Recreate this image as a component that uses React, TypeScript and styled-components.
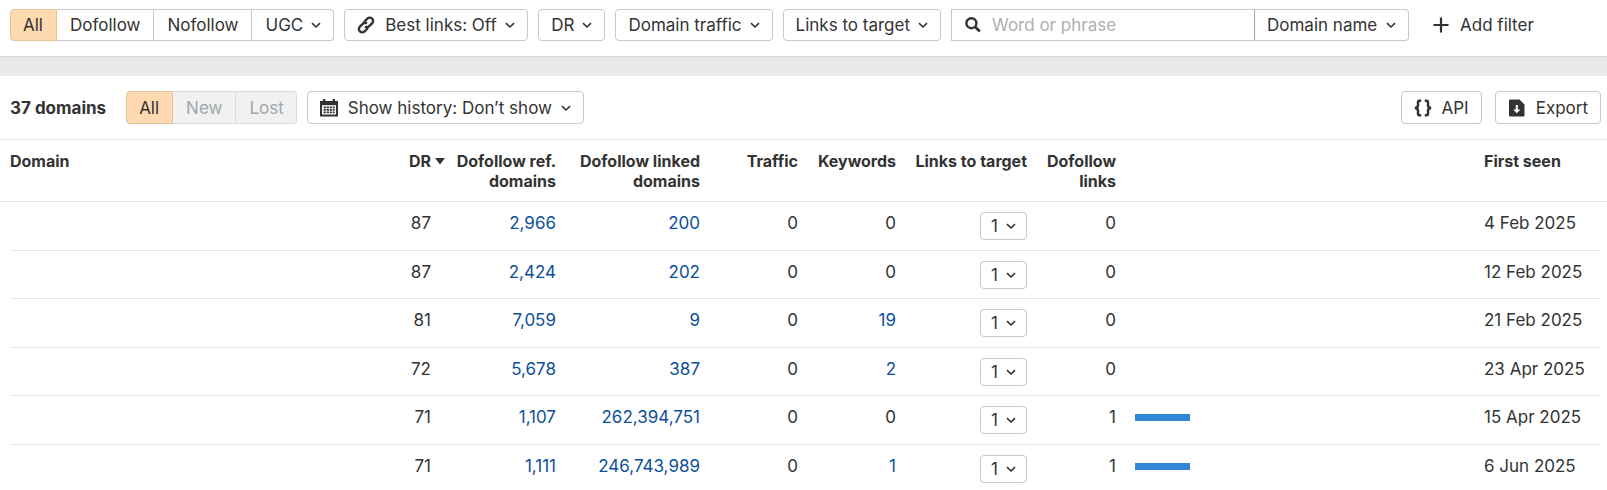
import React from "react";
import styled, { createGlobalStyle, css } from "styled-components";

const ink = "#333333";
const edge = "#c6c8c9";
const line = "#e6e7e8";
const linkBlue = "#0d4f9c";

const GlobalStyle = createGlobalStyle`
  *, *::before, *::after { box-sizing: border-box; }
  body {
    margin: 0;
    background: #ffffff;
    color: ${ink};
    font: 400 17px/24px Inter, "Liberation Sans", sans-serif;
  }
  button, select, input { font: inherit; color: inherit; margin: 0; }
  button, select { cursor: pointer; }
`;

const FilterBar = styled.header`
  display: flex;
  align-items: center;
  gap: 10px;
  padding: 9px 10px 15px;
  border-bottom: 1px solid #d5d8d9;
`;

const Divider = styled.div`
  height: 19px;
  background: #e8eaeb;
`;

const ResultsBar = styled.div`
  display: flex;
  align-items: center;
  gap: 10px;
  padding: 15px 6px 15px 10px;
`;

const Count = styled.h1`
  margin: 0 10px 0 0;
  font-size: 17px;
  line-height: 24px;
  font-weight: 700;
  white-space: nowrap;
`;

const Actions = styled.div`
  display: flex;
  gap: 13px;
  margin-left: auto;
`;

const control = css`
  display: inline-flex;
  align-items: center;
  flex: none;
  height: 32px;
  padding: 0 12px;
  border: 1px solid ${edge};
  border-radius: 4px;
  background: #ffffff;
  white-space: nowrap;
`;

const Button = styled.button<{ $tall?: boolean; $plain?: boolean }>`
  ${control}
  ${(p) => p.$tall && "height: 33px;"}
  ${(p) => p.$plain && "border-color: transparent; background: none;"}
`;

const SelectBox = styled.label<{ $tall?: boolean; $joined?: boolean }>`
  ${control}
  ${(p) => p.$tall && "height: 33px;"}
  ${(p) => p.$joined && "border-left-color: #a3a5a6; border-radius: 0 4px 4px 0;"}
`;

const Select = styled.select`
  appearance: none;
  border: 0;
  padding: 0;
  background: none;
  outline: none;
  height: 24px;
`;

const Segments = styled.div`
  display: flex;
  flex: none;
`;

const Segment = styled.button<{ $tall?: boolean }>`
  ${control}
  padding: 0 13px;
  border-radius: 0;
  ${(p) => p.$tall && "height: 33px;"}
  & + & { border-left: 0; }
  &:first-child { border-radius: 4px 0 0 4px; padding-left: 12px; }
  &:last-child { border-radius: 0 4px 4px 0; padding-right: 12px; }
  &[aria-pressed="true"] {
    background: #ffdab0;
    border-color: #e5c397;
  }
  &:disabled {
    background: #f0f1f2;
    border-color: #d9dbdc;
    color: #a3a6a8;
    cursor: default;
  }
`;

const SearchGroup = styled.div`
  display: flex;
  flex: 0 1 458px;
  min-width: 0;
`;

const SearchBox = styled.label`
  display: flex;
  align-items: center;
  flex: 1 1 0;
  min-width: 0;
  height: 32px;
  padding: 0 12px;
  border: 1px solid ${edge};
  border-right: 0;
`;

const SearchInput = styled.input`
  flex: 1;
  min-width: 0;
  border: 0;
  padding: 0;
  outline: none;
  background: none;
  &::placeholder { color: #adafb0; opacity: 1; }
`;

const LeadIcon = styled.svg.attrs({ width: 18, height: 18, viewBox: "0 0 18 18" })`
  display: block;
  flex: none;
  margin-right: 10px;
`;

const ChevronIcon = styled.svg`
  display: block;
  flex: none;
  margin-left: 8px;
`;

const Table = styled.table`
  width: 100%;
  table-layout: fixed;
  border-spacing: 0;
  border-top: 1px solid ${line};
`;

const Col = styled.col<{ $w?: number }>`
  ${(p) => p.$w && `width: ${p.$w}px;`}
`;

const HeadCell = styled.th<{ $start?: boolean }>`
  height: 62px;
  padding: 11px 0 10px ${(p) => (p.$start ? 10 : 0)}px;
  border-bottom: 1px solid ${line};
  vertical-align: top;
  text-align: ${(p) => (p.$start ? "left" : "right")};
  font-size: 16px;
  line-height: 20px;
  font-weight: 700;
  white-space: nowrap;
`;

const SortButton = styled.button`
  position: relative;
  border: 0;
  padding: 0;
  background: none;
`;

const SortArrow = styled.svg`
  position: absolute;
  left: calc(100% + 4px);
  top: 7px;
`;

const Row = styled.tr`
  height: 49px;
  background: linear-gradient(${line}, ${line}) 10px 100% / calc(100% - 16px) 1px no-repeat;
  &:nth-child(even) { height: 48px; }
  &:last-child { height: 44px; background: none; }
`;

const Cell = styled.td<{ $start?: boolean }>`
  padding: 9px 0 0 ${(p) => (p.$start ? 10 : 0)}px;
  vertical-align: top;
  text-align: ${(p) => (p.$start ? "left" : "right")};
  white-space: nowrap;
`;

const NumberLink = styled.a`
  color: ${linkBlue};
  text-decoration: none;
`;

const LinksButton = styled.button`
  ${control}
  height: 28px;
  margin-top: 1px;
  padding: 0 10px;
  vertical-align: top;
`;

const BarCell = styled(Cell)`
  padding: 18px 0 0 19px;
`;

const Bar = styled.div`
  height: 7px;
  background: #3087d9;
`;

const Chevron = () => (
  <ChevronIcon width="10" height="10" viewBox="0 0 10 10" fill="none" stroke={ink} strokeWidth="1.6" aria-hidden>
    <path d="M1 3.2 5 7l4-3.8" />
  </ChevronIcon>
);

const LinkIcon = () => (
  <LeadIcon fill="none" stroke={ink} strokeWidth="2.4" aria-hidden>
    <path d="M7 6 10.4 2.6a3.3 3.3 0 0 1 4.7 0a3.3 3.3 0 0 1 0 4.700L12.200 10.200a3.300 3.300 0 0 1-4.200.4" />
    <path d="M11 12 7.600 15.400a3.300 3.300 0 0 1-4.700 0a3.300 3.300 0 0 1 0-4.700L5.800 7.800a3.300 3.300 0 0 1 4.200-.4" />
  </LeadIcon>
);

const CalendarIcon = () => (
  <LeadIcon aria-hidden>
    <path fill={ink} d="M0 2h3V0h2.4v2h7.2V0H15v2h3v15.5H0z" />
    <path fill="#fff" d="M2 6.2h14v9.3H2z" />
    <path fill={ink} d="M3.600 7.400h2.200v1.800H3.600zM6.700 7.400h2.200v1.800H6.700zM9.700 7.400h2.200v1.800H9.700zM12.700 7.400h2v1.800h-2zM3.600 10h2.200v1.800H3.600zM6.700 10h2.200v1.800H6.700zM9.700 10h2.200v1.800H9.700zM12.700 10h2v1.800h-2zM3.600 12.600h2.200v1.700H3.600zM6.700 12.600h2.200v1.700H6.700zM9.700 12.600h2.200v1.700H9.700zM12.700 12.600h2v1.700h-2z" />
  </LeadIcon>
);

const SearchIcon = () => (
  <LeadIcon fill="none" stroke={ink} aria-hidden>
    <circle cx="7.4" cy="7.2" r="5" strokeWidth="2.4" />
    <path d="m11 10.8 4.8 4.8" strokeWidth="2.8" />
  </LeadIcon>
);

const PlusIcon = () => (
  <LeadIcon fill="none" stroke={ink} strokeWidth="2.2" aria-hidden>
    <path d="M9 1.5v15M1.5 9h15" />
  </LeadIcon>
);

const BracesIcon = () => (
  <LeadIcon fill="none" stroke={ink} strokeWidth="2.5" aria-hidden>
    <path d="M7.2 1.7H5.5Q4 1.7 4 3.2V6.6Q4 8.5 1 9Q4 9.5 4 11.4V14.8Q4 16.3 5.5 16.3H7.2" />
    <path d="M10.8 1.7H12.5Q14 1.7 14 3.2V6.6Q14 8.5 17 9Q14 9.5 14 11.4V14.8Q14 16.3 12.5 16.3H10.8" />
  </LeadIcon>
);

const ExportIcon = () => (
  <LeadIcon aria-hidden>
    <path fill={ink} d="M2 .5h9.5L16.5 5.5V16.5a1 1 0 0 1-1 1H2a1 1 0 0 1-1-1V1.5a1 1 0 0 1 1-1z" />
    <path fill="#fff" d="M7.8 6h2v4.5h2.6L8.8 14.2 5.2 10.5H7.8z" />
  </LeadIcon>
);

type Domain = {
  dr: number;
  ref: string;
  linked: string;
  keywords: number;
  dofollow: number;
  seen: string;
};

const domains: Domain[] = [
  { dr: 87, ref: "2,966", linked: "200", keywords: 0, dofollow: 0, seen: "4 Feb 2025" },
  { dr: 87, ref: "2,424", linked: "202", keywords: 0, dofollow: 0, seen: "12 Feb 2025" },
  { dr: 81, ref: "7,059", linked: "9", keywords: 19, dofollow: 0, seen: "21 Feb 2025" },
  { dr: 72, ref: "5,678", linked: "387", keywords: 2, dofollow: 0, seen: "23 Apr 2025" },
  { dr: 71, ref: "1,107", linked: "262,394,751", keywords: 0, dofollow: 1, seen: "15 Apr 2025" },
  { dr: 71, ref: "1,111", linked: "246,743,989", keywords: 1, dofollow: 1, seen: "6 Jun 2025" },
];

export default function App() {
  return (
    <>
      <GlobalStyle />
      <FilterBar>
        <Segments role="group" aria-label="Link type">
          <Segment aria-pressed="true">All</Segment>
          <Segment aria-pressed="false">Dofollow</Segment>
          <Segment aria-pressed="false">Nofollow</Segment>
          <Segment aria-haspopup="menu">UGC<Chevron /></Segment>
        </Segments>
        <SelectBox>
          <LinkIcon />
          <Select aria-label="Best links"><option>Best links: Off</option></Select>
          <Chevron />
        </SelectBox>
        <Button aria-haspopup="dialog">DR<Chevron /></Button>
        <Button aria-haspopup="dialog">Domain traffic<Chevron /></Button>
        <Button aria-haspopup="dialog">Links to target<Chevron /></Button>
        <SearchGroup>
          <SearchBox>
            <SearchIcon />
            <SearchInput type="text" aria-label="Word or phrase" placeholder="Word or phrase" />
          </SearchBox>
          <SelectBox $joined>
            <Select aria-label="Search in"><option>Domain name</option></Select>
            <Chevron />
          </SelectBox>
        </SearchGroup>
        <Button $plain><PlusIcon />Add filter</Button>
      </FilterBar>
      <Divider />
      <main>
        <ResultsBar>
          <Count>37 domains</Count>
          <Segments role="group" aria-label="Domain status">
            <Segment $tall aria-pressed="true">All</Segment>
            <Segment $tall disabled>New</Segment>
            <Segment $tall disabled>Lost</Segment>
          </Segments>
          <SelectBox $tall>
            <CalendarIcon />
            <Select aria-label="Show history"><option>Show history: Don’t show</option></Select>
            <Chevron />
          </SelectBox>
          <Actions>
            <Button $tall><BracesIcon />API</Button>
            <Button $tall><ExportIcon />Export</Button>
          </Actions>
        </ResultsBar>
        <Table>
          <colgroup>
            <Col $w={350} />
            <Col $w={81} />
            <Col $w={125} />
            <Col $w={144} />
            <Col $w={98} />
            <Col $w={98} />
            <Col $w={131} />
            <Col $w={89} />
            <Col $w={74} />
            <Col />
            <Col $w={133} />
          </colgroup>
          <thead>
            <tr>
              <HeadCell $start scope="col">Domain</HeadCell>
              <HeadCell scope="col" aria-sort="descending">
                <SortButton>
                  DR
                  <SortArrow width="10" height="7" viewBox="0 0 10 7" aria-hidden><path fill={ink} d="M0 0h10L5 6.5z" /></SortArrow>
                </SortButton>
              </HeadCell>
              <HeadCell scope="col">Dofollow ref.<br />domains</HeadCell>
              <HeadCell scope="col">Dofollow linked<br />domains</HeadCell>
              <HeadCell scope="col">Traffic</HeadCell>
              <HeadCell scope="col">Keywords</HeadCell>
              <HeadCell scope="col">Links to target</HeadCell>
              <HeadCell scope="col">Dofollow<br />links</HeadCell>
              <HeadCell as="td" />
              <HeadCell as="td" />
              <HeadCell $start scope="col">First seen</HeadCell>
            </tr>
          </thead>
          <tbody>
            {domains.map((d) => (
              <Row key={d.seen}>
                <Cell $start />
                <Cell>{d.dr}</Cell>
                <Cell><NumberLink href="#ref">{d.ref}</NumberLink></Cell>
                <Cell><NumberLink href="#linked">{d.linked}</NumberLink></Cell>
                <Cell>0</Cell>
                <Cell>{d.keywords ? <NumberLink href="#keywords">{d.keywords}</NumberLink> : 0}</Cell>
                <Cell><LinksButton aria-haspopup="true">1<Chevron /></LinksButton></Cell>
                <Cell>{d.dofollow}</Cell>
                <BarCell>{d.dofollow > 0 && <Bar />}</BarCell>
                <Cell />
                <Cell $start>{d.seen}</Cell>
              </Row>
            ))}
          </tbody>
        </Table>
      </main>
    </>
  );
}
